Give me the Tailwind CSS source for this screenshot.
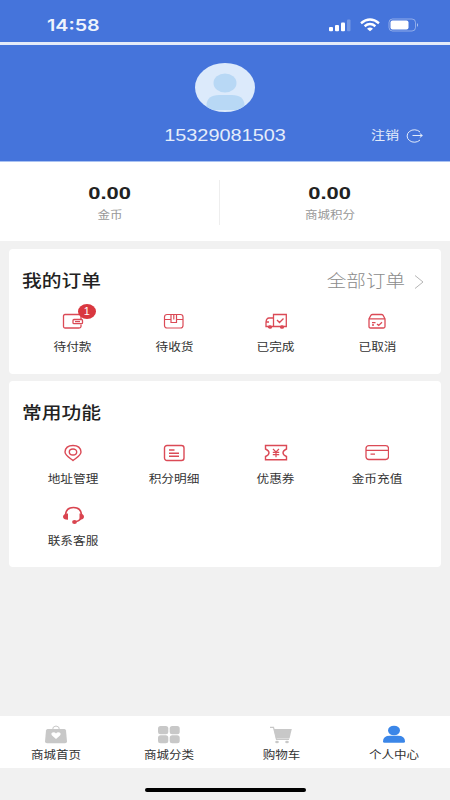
<!DOCTYPE html>
<html lang="zh-CN">
<head>
<meta charset="utf-8">
<meta name="viewport" content="width=device-width, initial-scale=1">
<title>个人中心</title>
<script src="https://cdn.jsdelivr.net/npm/@tailwindcss/browser@4"></script>
</head>
<body class="w-[450px] h-[800px] overflow-hidden bg-[#f1f1f1] flex flex-col font-['Liberation_Sans','Noto_Sans_CJK_SC',sans-serif] text-[#333] whitespace-nowrap">

<!-- Status bar -->
<div class="h-[45px] shrink-0 bg-[#4574db] border-b-3 border-[#e4ebf9] flex items-start justify-between pl-[47px] pr-[31px]">
  <span class="mt-[15px] text-[16px] leading-[20px] font-semibold text-[#eef3fc] origin-left scale-x-[1.23] font-['Inter',sans-serif]">14:58</span>
  <div class="mt-[17px] flex items-center h-[15px]">
    <svg class="w-[22px] h-[14px]" viewBox="0 0 22 14" fill="#fff"><rect x="0" y="9" width="4" height="4.2" rx="1"/><rect x="6" y="7" width="4" height="6.2" rx="1"/><rect x="12" y="4.5" width="4" height="8.7" rx="1"/><rect x="18" y="1.500" width="3.500" height="11.700" rx="1" opacity=".25"/></svg>
    <svg class="ml-[9px] w-[20px] h-[14px]" viewBox="0 0 20 14" fill="none" stroke="#fff" stroke-width="2.400"><path d="M1 5.200Q10-2 19 5.200"/><path d="M4.600 8.200Q10 3.900 15.400 8.200"/><path d="M7 10.700Q10 8.500 13 10.700L10 13.200Z" fill="#fff" stroke="none"/></svg>
    <svg class="ml-[8px] w-[31px] h-[14px]" viewBox="0 0 31 14"><rect x="1" y="1" width="26.500" height="12" rx="3.500" fill="none" stroke="#fff" stroke-opacity=".4"/><rect x="2.500" y="2.500" width="18" height="9" rx="2" fill="#fff"/><path d="M29 5Q31 7 29 9Z" fill="#fff" opacity=".6"/></svg>
  </div>
</div>

<!-- Profile header -->
<header class="h-[117px] shrink-0 bg-[#4574db] border-b border-[#a9c2f2] text-white flex flex-col items-center pt-[18px]">
  <svg class="w-[60px] h-[49px]" viewBox="0 0 60 49"><defs><clipPath id="avatar"><ellipse cx="30" cy="24.500" rx="30" ry="24.500"/></clipPath></defs><g clip-path="url(#avatar)"><rect width="60" height="49" fill="#dceafb"/><ellipse cx="30" cy="20" rx="11.500" ry="9.500" fill="#b8d8f5"/><path d="M11.500 47V42Q12 32 24 32H37Q49 32 49.500 42V47Z" fill="#b8d8f5"/></g></svg>
  <div class="mt-[12px] w-full grid grid-cols-[1fr_auto_1fr] items-center">
    <span></span>
    <span class="pt-px text-[17px] leading-[22px] text-[#e4ecfa] scale-x-[1.17]">15329081503</span>
    <div class="flex items-center justify-end pr-[27px] gap-[9px]">
      <span class="text-[12px] leading-[20px] text-[#e4ecfa] scale-x-[1.17]">注销</span>
      <svg class="w-[17px] h-[14px]" viewBox="0 0 17 14" fill="none" stroke="#e4ecfa"><path d="M14 3A7.300 6.200 0 1 0 14 11M6.500 6.500H16.300M13.800 4.500L16.300 6.500L13.800 8.500"/></svg>
    </div>
  </div>
</header>

<!-- Balances -->
<section class="h-[79px] shrink-0 bg-white pr-[10px] pt-[18px]">
  <div class="h-[44px] grid grid-cols-2 divide-x divide-[#eee] text-center">
    <div class="flex flex-col items-center pt-[3px]">
      <b class="text-[17px] leading-[22px] text-[#222] scale-x-[1.29]">0.00</b>
      <span class="text-[11px] leading-[20px] text-[#999] scale-x-[1.14]">金币</span>
    </div>
    <div class="flex flex-col items-center pt-[3px]">
      <b class="text-[17px] leading-[22px] text-[#222] scale-x-[1.29]">0.00</b>
      <span class="text-[11px] leading-[20px] text-[#999] scale-x-[1.14]">商城积分</span>
    </div>
  </div>
</section>

<!-- Orders -->
<section class="mt-[8px] mx-[9px] h-[125px] shrink-0 bg-white rounded-[4px] px-[13px] pt-[21px]">
  <div class="flex justify-between items-center h-[24px]">
    <h2 class="text-[17px] leading-[24px] font-medium text-[#222] origin-left scale-x-[1.16]">我的订单</h2>
    <div class="flex items-center gap-[9px] pr-[4px]">
      <span class="text-[17px] leading-[24px] font-light text-[#8c8c8c] origin-right scale-x-[1.15]">全部订单</span>
      <svg class="w-[10px] h-[14px] -mt-px" viewBox="0 0 10 14" fill="none" stroke="#b5b5b5"><path d="M1 .5L9 7L1 13.500"/></svg>
    </div>
  </div>
  <div class="mt-[19px] grid grid-cols-4">
    <div class="flex flex-col items-center">
      <div class="relative h-[17px]">
        <svg class="w-[22px] h-[17px]" viewBox="0 0 22 17" fill="none" stroke="#db4a56" stroke-width="1.300"><path d="M19 6V3Q19 1.500 17 1.500H3Q1.500 1.500 1.500 3V13.500Q1.500 15 3 15H17Q19 15 19 13.500V11.500"/><rect x="11" y="6.500" width="9.500" height="4.200" rx="1"/><path d="M13 8.600H18"/></svg>
        <span class="absolute left-[16px] top-[-9px] w-[18px] h-[15px] rounded-[50%] bg-[#d9373f] text-white text-[11px] leading-[15px] text-center">1</span>
      </div>
      <span class="mt-[8px] text-[11px] leading-[18px] scale-x-[1.15]">待付款</span>
    </div>
    <div class="flex flex-col items-center">
      <svg class="w-[22px] h-[17px]" viewBox="0 0 22 17" fill="none" stroke="#db4a56" stroke-width="1.200"><rect x="1.500" y="1.500" width="18.500" height="13.500" rx="2.500"/><path d="M1.500 6.500H8M13.500 6.500H20M8 1.500V9.500H13.500V1.500M10.800 1.500V6.500"/></svg>
      <span class="mt-[8px] text-[11px] leading-[18px] scale-x-[1.15]">待收货</span>
    </div>
    <div class="flex flex-col items-center">
      <svg class="w-[22px] h-[17px]" viewBox="0 0 22 17" fill="none" stroke="#db4a56" stroke-width="1.300"><path d="M8.500 13.500V1.500H21.300V13.500H1V9Q1.500 5 4 5H8.500M12 7L14.500 9.500L18.500 5.500M1 9H4"/><ellipse cx="5" cy="14" rx="1.500" ry="1.200" fill="#db4a56"/><ellipse cx="17" cy="14" rx="1.500" ry="1.200" fill="#db4a56"/></svg>
      <span class="mt-[8px] text-[11px] leading-[18px] scale-x-[1.15]">已完成</span>
    </div>
    <div class="flex flex-col items-center">
      <svg class="w-[22px] h-[17px]" viewBox="0 0 22 17" fill="none" stroke="#db4a56" stroke-width="1.300"><path d="M3 5.800L5 2.200Q5.500 1.500 6.500 1.500H15.500Q16.500 1.500 17 2.200L19 5.800V13.500Q19 15 17.500 15H4.500Q3 15 3 13.500ZM3 5.800H19M6 9.700H9.500M6 12H8M11 11L12.700 12.400L16 9.300"/></svg>
      <span class="mt-[8px] text-[11px] leading-[18px] scale-x-[1.15]">已取消</span>
    </div>
  </div>
</section>

<!-- Common functions -->
<section class="mt-[7px] mx-[9px] h-[186px] shrink-0 bg-white rounded-[4px] px-[13px] pt-[21px]">
  <h2 class="w-fit text-[17px] leading-[24px] font-medium text-[#222] origin-left scale-x-[1.16]">常用功能</h2>
  <div class="mt-[18px] grid grid-cols-4 gap-y-[18px]">
    <div class="flex flex-col items-center">
      <svg class="w-[22px] h-[18px]" viewBox="0 0 22 18" fill="none" stroke="#db4a56" stroke-width="1.400"><path d="M11 16.500C8 14 3 11.500 3 8Q3.500 1.500 11 1.500T19 8C19 11.500 14 14 11 16.500Z"/><ellipse cx="11" cy="8" rx="3.700" ry="3"/></svg>
      <span class="mt-[8px] text-[11px] leading-[18px] scale-x-[1.15]">地址管理</span>
    </div>
    <div class="flex flex-col items-center">
      <svg class="w-[22px] h-[18px]" viewBox="0 0 22 18" fill="none" stroke="#db4a56" stroke-width="1.400"><rect x="1.500" y="1.500" width="19.500" height="15" rx="2.500"/><path d="M6 6H11.500M6 9.200H16M6 12.300H16"/></svg>
      <span class="mt-[8px] text-[11px] leading-[18px] scale-x-[1.15]">积分明细</span>
    </div>
    <div class="flex flex-col items-center">
      <svg class="w-[24px] h-[18px]" viewBox="0 0 24 18" fill="none" stroke="#db4a56" stroke-width="1.400"><path d="M1.500 1.500H22.500V5Q19 6.500 19 8.800T22.500 12.500V15.700H1.500V12.500Q5 11 5 8.800T1.500 5Z"/><path d="M9 5L12 8L15 5M12 8V13.200M8.800 8.300H15.200M8.800 10.700H15.200" stroke-width="1.200"/></svg>
      <span class="mt-[8px] text-[11px] leading-[18px] scale-x-[1.15]">优惠券</span>
    </div>
    <div class="flex flex-col items-center">
      <svg class="w-[24px] h-[18px]" viewBox="0 0 24 18" fill="none" stroke="#db4a56" stroke-width="1.300"><rect x="1" y="1.700" width="22.500" height="13.800" rx="2.800"/><path d="M1 6.300H23.500M5.500 10.200H10"/></svg>
      <span class="mt-[8px] text-[11px] leading-[18px] scale-x-[1.15]">金币充值</span>
    </div>
    <div class="flex flex-col items-center">
      <svg class="w-[22px] h-[18px]" viewBox="0 0 22 18" fill="none" stroke="#d9444f" stroke-width="1.600"><path d="M3.500 9Q4 1.500 11.500 1.500T19.500 9M19 12Q17.500 15.300 12.500 15.800"/><path d="M6 7.500V13.800Q1 13.500 1 10.700T6 7.500ZM17.500 7.500V13.800Q22 13.500 22 10.700T17.500 7.500Z" fill="#d9444f" stroke="none"/><ellipse cx="12.500" cy="16" rx="2.400" ry="1.900" fill="#d9444f" stroke="none"/></svg>
      <span class="mt-[8px] text-[11px] leading-[18px] scale-x-[1.15]">联系客服</span>
    </div>
  </div>
</section>

<!-- Tab bar -->
<nav class="mt-auto h-[52px] shrink-0 bg-white grid grid-cols-4 pt-[9px]">
  <div class="flex flex-col items-center">
    <svg class="w-[22px] h-[19px]" viewBox="0 0 22 19"><path d="M7.500 5Q7.500 1 11 1T14.500 5" fill="none" stroke="#c8c8c8"/><path d="M2.500 4H19.500Q20.800 4 21 5.500L22 16.500Q22 18.300 20 18.300H2Q0 18.300 0 16.500L1 5.500Q1.200 4 2.500 4Z" fill="#c8c8c8"/><path d="M11 14L7 10.500Q5.500 8.500 7.500 7.500T11 8.500Q12.500 6.500 14.500 7.500T15 10.500Z" fill="#fff"/></svg>
    <span class="mt-[2px] text-[11px] leading-[18px] scale-x-[1.14]">商城首页</span>
  </div>
  <div class="flex flex-col items-center">
    <svg class="w-[22px] h-[19px]" viewBox="0 0 22 19" fill="#c8c8c8"><rect x="0" y="1" width="10.300" height="8.200" rx="2.500"/><rect x="11.700" y="1" width="10" height="8.200" rx="2.500"/><rect x="0" y="10.200" width="10.300" height="8" rx="2.500"/><rect x="11.700" y="10.200" width="10" height="8" rx="2.500"/></svg>
    <span class="mt-[2px] text-[11px] leading-[18px] scale-x-[1.14]">商城分类</span>
  </div>
  <div class="flex flex-col items-center">
    <svg class="w-[22px] h-[19px]" viewBox="0 0 22 19" fill="#c8c8c8"><path d="M0 2.300H3.500L6.500 14.300H19" fill="none" stroke="#c8c8c8" stroke-width="1.200"/><path d="M3.800 4H21.800L19.500 13.500H6Z"/><ellipse cx="7" cy="17" rx="1.800" ry="1.300"/><ellipse cx="17" cy="17" rx="1.800" ry="1.300"/></svg>
    <span class="mt-[2px] text-[11px] leading-[18px] scale-x-[1.14]">购物车</span>
  </div>
  <div class="flex flex-col items-center">
    <svg class="w-[22px] h-[19px]" viewBox="0 0 22 19" fill="#3b86e8"><ellipse cx="11" cy="5.500" rx="6" ry="4.800"/><path d="M0 16.500Q0 10.800 7 10.800H15Q22 10.800 22 16.500Q22 17.700 20.500 17.700H1.500Q0 17.700 0 16.500Z"/></svg>
    <span class="mt-[2px] text-[11px] leading-[18px] scale-x-[1.14]">个人中心</span>
  </div>
</nav>

<!-- Home indicator -->
<div class="h-[32px] shrink-0 flex justify-center pt-[20px]"><div class="w-[161px] h-[4px] rounded-full bg-black"></div></div>
</body>
</html>
